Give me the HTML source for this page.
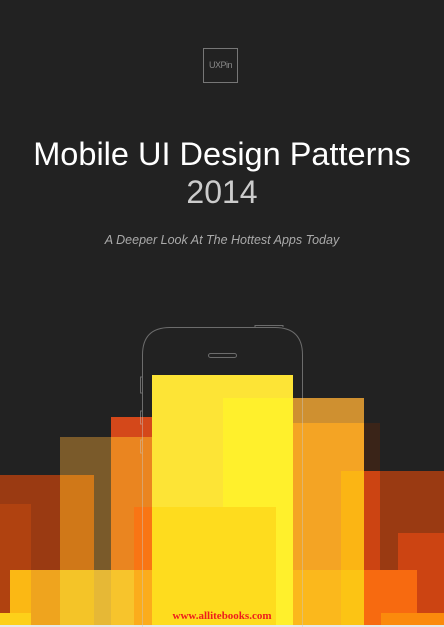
<!DOCTYPE html><html><head><style>
body{margin:0;width:444px;height:627px;background:#222;position:relative;overflow:hidden;font-family:"Liberation Sans",sans-serif}
div.b{position:absolute}
</style></head><body>
<div style="position:absolute;left:203px;top:48px;width:33px;height:33px;border:1.5px solid #777;color:#888;font-size:9px;line-height:33px;text-align:center;letter-spacing:-0.5px">UXPin</div>
<div style="position:absolute;left:0;width:444px;top:135px;text-align:center;color:#fff;font-size:32.5px;line-height:38px">Mobile UI Design Patterns</div>
<div style="position:absolute;left:0;width:444px;top:174px;text-align:center;color:#ccc;font-size:32px;line-height:36px">2014</div>
<div style="position:absolute;left:0;width:444px;top:233px;text-align:center;color:#aaa;font-size:12.5px;font-style:italic">A Deeper Look At The Hottest Apps Today</div>

<div class="b" style="left:293px;top:423px;width:87px;height:204px;background:#3a2418"></div>
<div class="b" style="left:223px;top:398px;width:141px;height:229px;background:#cf9030"></div>
<div class="b" style="left:341px;top:471px;width:103px;height:156px;background:#9a3a12"></div>
<div class="b" style="left:398px;top:533px;width:46px;height:94px;background:#cc4412"></div>
<div class="b" style="left:0;top:475px;width:94px;height:152px;background:#9a3a12"></div>
<div class="b" style="left:0;top:504px;width:31px;height:123px;background:#b04210"></div>
<div class="b" style="left:60px;top:437px;width:141px;height:190px;background:#7a5a2a"></div>
<div class="b" style="left:60px;top:475px;width:34px;height:152px;background:#d07818"></div>
<div class="b" style="left:111px;top:417px;width:41px;height:210px;background:#d4481a"></div>
<div class="b" style="left:111px;top:437px;width:90px;height:190px;background:#ea8520"></div>
<div class="b" style="left:134px;top:507px;width:18px;height:120px;background:#f97514"></div>
<div class="b" style="left:293px;top:423px;width:71px;height:204px;background:#f4a424"></div>
<div class="b" style="left:341px;top:471px;width:23px;height:156px;background:#fbb514"></div>
<div class="b" style="left:364px;top:471px;width:16px;height:156px;background:#cc4412"></div>
<div class="b" style="left:152px;top:375px;width:141px;height:252px;background:#fde436"></div>
<div class="b" style="left:223px;top:398px;width:70px;height:229px;background:#fff02c"></div>
<div class="b" style="left:152px;top:507px;width:124px;height:120px;background:#fedc1e"></div>
<div class="b" style="left:10px;top:570px;width:21px;height:57px;background:#fbb814"></div>
<div class="b" style="left:31px;top:570px;width:29px;height:57px;background:#efa41e"></div>
<div class="b" style="left:60px;top:570px;width:34px;height:57px;background:#f4c428"></div>
<div class="b" style="left:94px;top:570px;width:17px;height:57px;background:#e6b836"></div>
<div class="b" style="left:111px;top:570px;width:23px;height:57px;background:#f7c42c"></div>
<div class="b" style="left:134px;top:570px;width:18px;height:57px;background:#fbac1c"></div>
<div class="b" style="left:293px;top:570px;width:71px;height:57px;background:#fbb81c"></div>
<div class="b" style="left:341px;top:570px;width:23px;height:57px;background:#fcc414"></div>
<div class="b" style="left:364px;top:570px;width:53px;height:57px;background:#f76a10"></div>
<div class="b" style="left:0;top:613px;width:31px;height:14px;background:#fdd019"></div>
<div class="b" style="left:381px;top:613px;width:63px;height:14px;background:#fb8a0c"></div>
<div class="b" style="left:0;top:625px;width:444px;height:2px;background:#e8e8e8"></div>

<svg style="position:absolute;left:0;top:0" width="444" height="627">
<g fill="none" stroke="rgba(200,200,200,0.45)" stroke-width="1">
<path d="M142.5 627 V355 Q142.5 327.5 170 327.5 H275 Q302.5 327.5 302.5 355 V627"/>
<rect x="208.5" y="353.5" width="28" height="4" rx="2"/>
<path d="M255 327 V325.5 H283 V327"/>
<path d="M142 377 H140.5 V393 H142 M142 411 H140.5 V424 H142 M142 440 H140.5 V453 H142"/>
</g></svg>
<div style="position:absolute;left:0;width:444px;top:610px;text-align:center;color:#ee1c1c;font:bold 11px 'Liberation Serif',serif">www.allitebooks.com</div>
</body></html>
